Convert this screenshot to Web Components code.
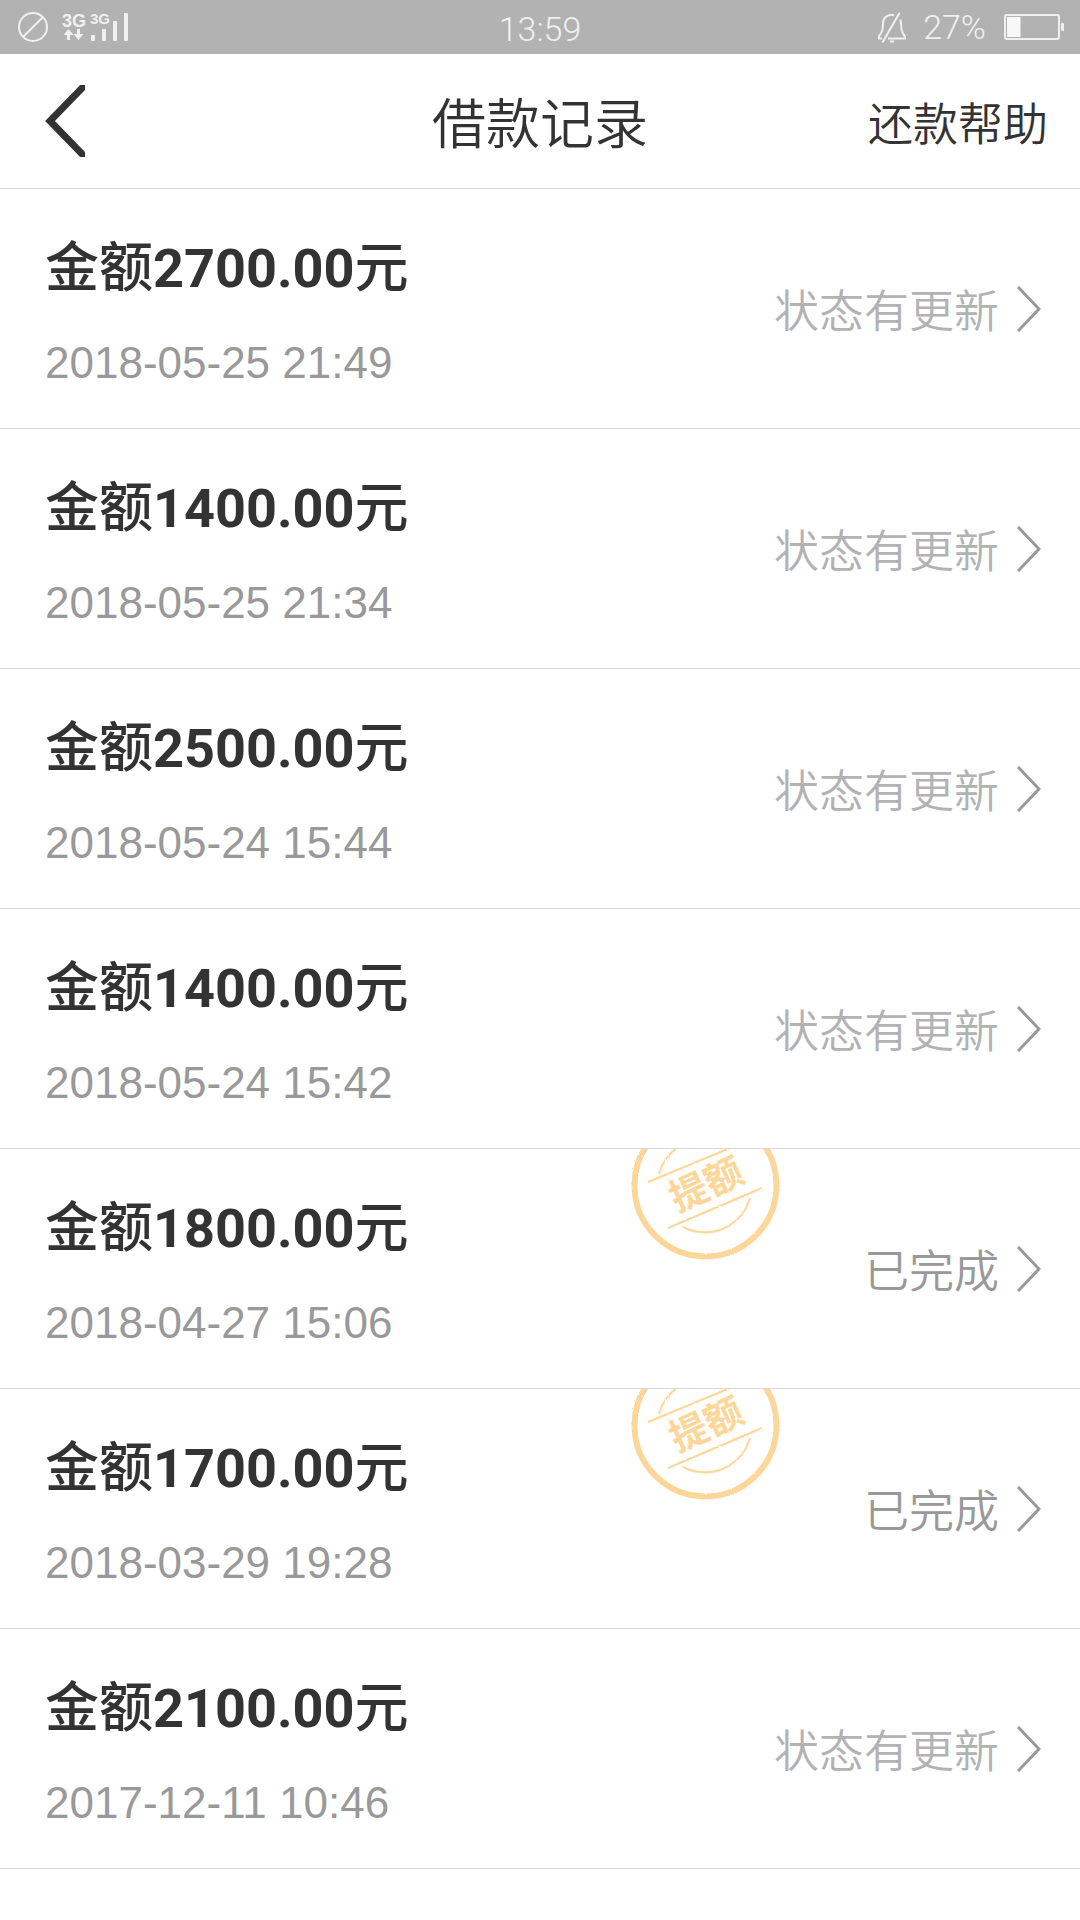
<!DOCTYPE html>
<html lang="zh-CN">
<head>
<meta charset="utf-8">
<meta name="viewport" content="width=device-width, initial-scale=1">
<title>借款记录</title>
<style>
  body {
    margin: 0;
    background: #fff;
    color: #333;
    font-family: Roboto, "Noto Sans CJK SC", sans-serif;
  }
</style>
</head>
<body>
<status-bar time="13:59" battery="27"></status-bar>
<nav-bar>
  借款记录
  <span slot="action">还款帮助</span>
</nav-bar>
<main>
  <loan-record amount="2700.00" date="2018-05-25 21:49">状态有更新</loan-record>
  <loan-record amount="1400.00" date="2018-05-25 21:34">状态有更新</loan-record>
  <loan-record amount="2500.00" date="2018-05-24 15:44">状态有更新</loan-record>
  <loan-record amount="1400.00" date="2018-05-24 15:42">状态有更新</loan-record>
  <loan-record amount="1800.00" date="2018-04-27 15:06" done>已完成<raise-stamp slot="stamp"></raise-stamp></loan-record>
  <loan-record amount="1700.00" date="2018-03-29 19:28" done>已完成<raise-stamp slot="stamp"></raise-stamp></loan-record>
  <loan-record amount="2100.00" date="2017-12-11 10:46">状态有更新</loan-record>
</main>

<script>
class StatusBar extends HTMLElement {
  constructor () {
    super()
    this.attachShadow({ mode: 'open' })
  }

  connectedCallback () {
    const battery = Number(this.getAttribute('battery'))

    this.shadowRoot.innerHTML = `
      <style>
        :host {
          display: grid;
          grid-template-columns: 1fr auto 1fr;
          align-items: center;
          height: 54px;
          padding: 0 16px;
          background: #b2b2b2;
          color: #f0f0f0;
          font-size: 34px;
          font-weight: 300;
          line-height: 50px;
        }
        svg {
          display: block;
        }
        .left, .right {
          display: flex;
          align-items: center;
        }
        .left {
          gap: 12px;
        }
        .right {
          justify-content: flex-end;
          gap: 16px;
        }
        .time {
          padding-top: 4px;
        }
        .network {
          font-family: "Liberation Sans", sans-serif;
          font-weight: 700;
        }
      </style>
      <div class="left">
        <svg width="34" height="34" viewBox="0 0 34 34" fill="none" stroke="currentColor" stroke-width="2">
          <circle cx="17" cy="17" r="14"/>
          <path d="M7 27L27 7"/>
        </svg>
        <svg class="network" width="68" height="34" viewBox="0 0 68 34" fill="currentColor">
          <text x="0" y="17" font-size="18">3G</text>
          <text x="28" y="14" font-size="15">3G</text>
          <path d="M6.500 19l5 6h-3.500v5h-3v-5h-3.500zM16.500 30l5-6h-3.500v-5h-3v5h-3.500z"/>
          <rect x="29" y="25" width="4" height="6" rx="1"/>
          <rect x="40" y="19" width="4" height="12" rx="1"/>
          <rect x="51" y="11" width="4" height="20" rx="1"/>
          <rect x="62" y="3" width="4" height="28" rx="1"/>
        </svg>
      </div>
      <div class="time">${this.getAttribute('time')}</div>
      <div class="right">
        <svg width="30" height="34" viewBox="0 0 30 34" fill="none" stroke="currentColor" stroke-width="2">
          <path d="M17 5.500C15 4.500 13 4.500 11.500 5.500C7 7 6 10 6 14C6 21 4.500 23 2 26V28.500H5M23 9.500C24.500 12 24 16 24.500 19C25 23 26.500 24.500 28 26.500V28.500H11M22.500 3L5.500 32.500M13 31.500H17"/>
        </svg>
        <span>${battery}%</span>
        <svg width="62" height="30" viewBox="0 0 62 30">
          <rect x="3" y="3" width="54" height="24" rx="2" fill="none" stroke="currentColor" stroke-width="2"/>
          <rect x="5" y="5" width="${battery * 0.5}" height="20" fill="#f8f8f8"/>
          <rect x="59" y="11" width="3" height="8" rx="1" fill="currentColor"/>
        </svg>
      </div>
    `
  }
}

class NavBar extends HTMLElement {
  constructor () {
    super()
    this.attachShadow({ mode: 'open' })
  }

  connectedCallback () {
    this.shadowRoot.innerHTML = `
      <style>
        :host {
          display: grid;
          grid-template-columns: 1fr auto 1fr;
          align-items: center;
          height: 134px;
          padding: 0 32px;
          border-bottom: 1px solid #d9d9d9;
        }
        button {
          justify-self: start;
          padding: 0 13px;
          border: 0;
          background: none;
          color: inherit;
          cursor: pointer;
        }
        svg {
          display: block;
        }
        h1, a {
          padding-top: 10px;
          line-height: 64px;
        }
        h1 {
          margin: 0;
          font-size: 54px;
          font-weight: 350;
        }
        a {
          justify-self: end;
          color: inherit;
          font-size: 45px;
          font-weight: 350;
          text-decoration: none;
        }
      </style>
      <button type="button" aria-label="返回">
        <svg width="40" height="72" viewBox="0 0 40 72" fill="none" stroke="currentColor" stroke-width="7">
          <path d="M41 -1L5 36L41 73"/>
        </svg>
      </button>
      <h1><slot></slot></h1>
      <a href="#help"><slot name="action"></slot></a>
    `

    this.shadowRoot.querySelector('button').addEventListener('click', () => {
      history.back()
    })
  }
}

class LoanRecord extends HTMLElement {
  constructor () {
    super()
    this.attachShadow({ mode: 'open' })
  }

  connectedCallback () {
    this.shadowRoot.innerHTML = `
      <style>
        :host {
          display: block;
          position: relative;
          overflow: hidden;
          border-bottom: 1px solid #d9d9d9;
        }
        a {
          display: flex;
          justify-content: space-between;
          padding: 0 39px 0 45px;
          color: inherit;
          text-decoration: none;
        }
        .info {
          display: flex;
          flex-direction: column;
          gap: 36px;
          padding: 48px 0 39px;
        }
        .amount {
          font-size: 54px;
          font-weight: 500;
          line-height: 64px;
        }
        b {
          font-weight: 700;
        }
        time {
          color: #999;
          font-family: "Liberation Sans", sans-serif;
          font-size: 44px;
          line-height: 52px;
        }
        .status {
          display: flex;
          align-items: center;
          gap: 18px;
          color: #b2b2b2;
          font-size: 45px;
          font-weight: 350;
        }
        :host([done]) .status {
          color: #999;
        }
        svg {
          display: block;
        }
        slot[name="stamp"] {
          display: block;
          position: absolute;
          top: 0;
          right: 300px;
        }
      </style>
      <a href="#record">
        <div class="info">
          <div class="amount">金额<b>${this.getAttribute('amount')}</b>元</div>
          <time>${this.getAttribute('date')}</time>
        </div>
        <div class="status">
          <span><slot></slot></span>
          <svg width="24" height="46" viewBox="0 0 24 46" fill="none" stroke="#999" stroke-width="3">
            <path d="M1 1L22 23L1 45"/>
          </svg>
        </div>
      </a>
      <slot name="stamp"></slot>
    `
  }
}

class RaiseStamp extends HTMLElement {
  constructor () {
    super()
    this.attachShadow({ mode: 'open' })
  }

  connectedCallback () {
    this.shadowRoot.innerHTML = `
      <style>
        :host {
          display: block;
        }
        svg {
          display: block;
        }
        text {
          font-size: 38px;
          font-weight: 700;
        }
      </style>
      <svg width="149" height="112" viewBox="0 0 149 112" fill="none" stroke="#fcd799">
        <filter id="rough" x="-5%" y="-5%" width="110%" height="110%">
          <feTurbulence type="fractalNoise" baseFrequency="0.3" numOctaves="2"/>
          <feDisplacementMap in="SourceGraphic" scale="2"/>
        </filter>
        <g filter="url(#rough)">
          <circle cx="74.500" cy="36.500" r="71" stroke-width="6"/>
          <path stroke-width="2" d="M17 33L99 -1M37 79L131 39M28 25A47 47 0 0 1 46 -1M52 78A47 47 0 0 0 119 49"/>
        </g>
        <text transform="translate(75 35) rotate(-25)" text-anchor="middle" y="14" fill="#fcd799" stroke="none">提额</text>
      </svg>
    `
  }
}

customElements.define('status-bar', StatusBar)
customElements.define('nav-bar', NavBar)
customElements.define('loan-record', LoanRecord)
customElements.define('raise-stamp', RaiseStamp)
</script>
</body>
</html>
